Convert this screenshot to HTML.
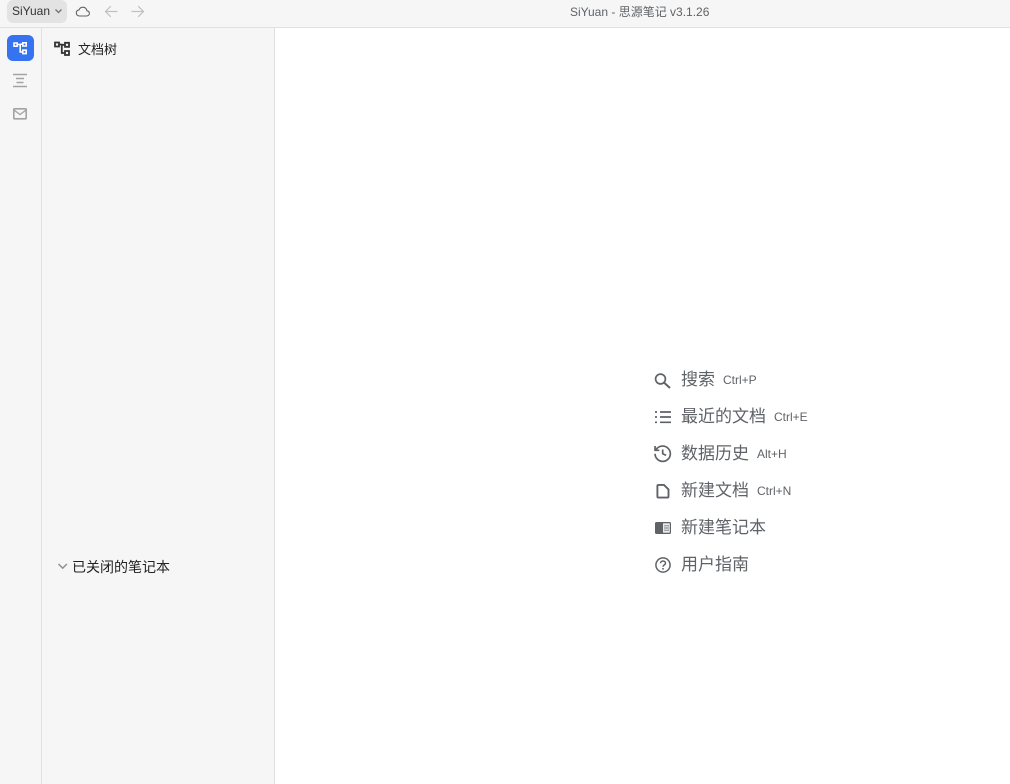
<!DOCTYPE html>
<html lang="zh">
<head>
<meta charset="utf-8">
<title>SiYuan</title>
<style>
html,body{margin:0;padding:0;width:1010px;height:784px;overflow:hidden;background:#fff;font-family:"Liberation Sans","Noto Sans CJK SC",sans-serif}
.a{position:absolute;white-space:nowrap}
svg{position:absolute;display:block;overflow:visible;left:0;top:0}
.t{font-size:17px;color:#5f6368;line-height:24px;height:24px;left:681px}
.k{font-size:12px;color:#5f6368;line-height:16px;height:16px}
</style>
</head>
<body>
<div class="a" style="left:0;top:0;width:1010px;height:27px;background:#f6f6f6;border-bottom:1px solid #e0e0e0"></div>
<div class="a" style="left:0;top:28px;width:41px;height:756px;background:#f6f6f6;border-right:1px solid #e0e0e0"></div>
<div class="a" style="left:42px;top:28px;width:232px;height:756px;background:#f6f6f6;border-right:1px solid #e0e0e0"></div>

<div class="a" style="left:7px;top:0;width:60px;height:23px;background:#e3e3e3;border-radius:6px"></div>
<div class="a" style="left:12px;top:3px;font-size:12px;line-height:16px;color:#333">SiYuan</div>
<div class="a" style="left:570px;top:4px;font-size:12px;line-height:17px;color:#5f6368">SiYuan - 思源笔记 v3.1.26</div>
<div class="a" style="left:7px;top:35px;width:27px;height:26px;background:#3573f0;border-radius:6px"></div>
<div class="a" style="left:78px;top:40px;font-size:13px;line-height:19px;color:#222">文档树</div>
<div class="a" style="left:72px;top:557px;font-size:14px;line-height:20px;color:#222">已关闭的笔记本</div>

<svg width="1010" height="784" viewBox="0 0 1010 784" fill="none">
<!-- top bar -->
<path d="M55.500 9.500L58.500 12.500L61.500 9.500" stroke="#777" stroke-width="1.400"/>
<path d="M79.500 16H86.500C88.200 16 89.400 14.900 89.400 13.400C89.400 12 88.400 11 87 10.800C86.400 8.500 84.900 7.200 82.800 7.200C81 7.200 79.700 8.200 79 9.900C77.400 10.100 76.300 11.300 76.300 12.900C76.300 14.700 77.700 16 79.500 16Z" stroke="#5f6368" stroke-width="1.100"/>
<path d="M117.500 11.500H105.500M110.800 6.200L105.500 11.500L110.800 16.800" stroke="#c0c0c0" stroke-width="1.200"/>
<path d="M131.500 11.500H143.500M138.200 6.200L143.500 11.500L138.200 16.800" stroke="#c0c0c0" stroke-width="1.200"/>

<!-- dock -->
<path d="M14 43H17.200V46.200H14ZM22.800 42.800H26.200V46H22.800ZM22.800 50.200H26.200V53.600H22.800ZM17.200 44.500H20.200M20.200 44.200H22.800M20.200 44.200V52H22.800" stroke="#fff" stroke-width="1.600"/>
<path d="M13 74.500H27M16 78.500H24M16.500 82.500H23.500M13 86.500H27" stroke="#a3a3a3" stroke-width="1.500"/>
<rect x="13.800" y="108.800" width="12.400" height="10" rx=".8" stroke="#a3a3a3" stroke-width="1.600"/>
<path d="M14 110L20 114.500L26 110" stroke="#a3a3a3" stroke-width="1.300"/>

<!-- tree header icon -->
<path d="M55 42.500H59V46.500H55ZM65 42.800H69V46.800H65ZM65 51H69V55H65ZM59 44.500H61.800M61.800 44.800H65M61.800 44.800V53H65" stroke="#333" stroke-width="1.800"/>

<!-- closed notebooks chevron -->
<path d="M58.500 564L62.700 568.200L66.900 564" stroke="#8f9296" stroke-width="1.500"/>

<!-- search -->
<circle cx="660.500" cy="379" r="4.900" stroke="#5f6368" stroke-width="1.700"/>
<path d="M664.200 382.700L670 388" stroke="#5f6368" stroke-width="2"/>

<!-- list -->
<path d="M655 412H657M660 412H671M655 417H657M660 417H671M655 422.300H657M660 422.300H671" stroke="#5f6368" stroke-width="1.700"/>

<!-- history -->
<g transform="translate(652.500 443.500) scale(.85)" stroke="#5f6368" stroke-width="2">
<path d="M3 12a9 9 0 1 0 9-9 9.750 9.750 0 0 0-6.740 2.740L3 8"/>
<path d="M3 3v5h5"/>
<path d="M12 7v5l4 2"/>
</g>

<!-- file -->
<path d="M658.500 484.900H664L668.500 489.400V496.500Q668.500 497.600 667.400 497.600H658.500Q657.400 497.600 657.400 496.500V486Q657.400 484.900 658.500 484.900Z" stroke="#5f6368" stroke-width="1.900"/>

<!-- notebook -->
<rect x="655" y="522" width="16" height="12" rx="1.500" fill="#5f6368"/>
<rect x="663" y="523.300" width="6.800" height="9.400" fill="#eceded"/>
<path d="M664 525.800H669M664 528H669M664 530.200H669" stroke="#777a7e" stroke-width=".9"/>

<!-- help -->
<circle cx="663" cy="565" r="7.100" stroke="#5f6368" stroke-width="1.500"/>
<path d="M660.500 563.300C660.500 561.900 661.600 561 663 561C664.400 561 665.500 561.900 665.500 563.200C665.500 564.800 663 565 663 566.800" stroke="#5f6368" stroke-width="1.500"/>
<rect x="662.200" y="568" width="1.600" height="1.600" fill="#5f6368"/>
</svg>

<div class="a t" style="top:368px">搜索</div>
<div class="a k" style="left:723px;top:372px">Ctrl+P</div>
<div class="a t" style="top:405px">最近的文档</div>
<div class="a k" style="left:774px;top:409px">Ctrl+E</div>
<div class="a t" style="top:442px">数据历史</div>
<div class="a k" style="left:757px;top:446px">Alt+H</div>
<div class="a t" style="top:479px">新建文档</div>
<div class="a k" style="left:757px;top:483px">Ctrl+N</div>
<div class="a t" style="top:516px">新建笔记本</div>
<div class="a t" style="top:553px">用户指南</div>
</body>
</html>
